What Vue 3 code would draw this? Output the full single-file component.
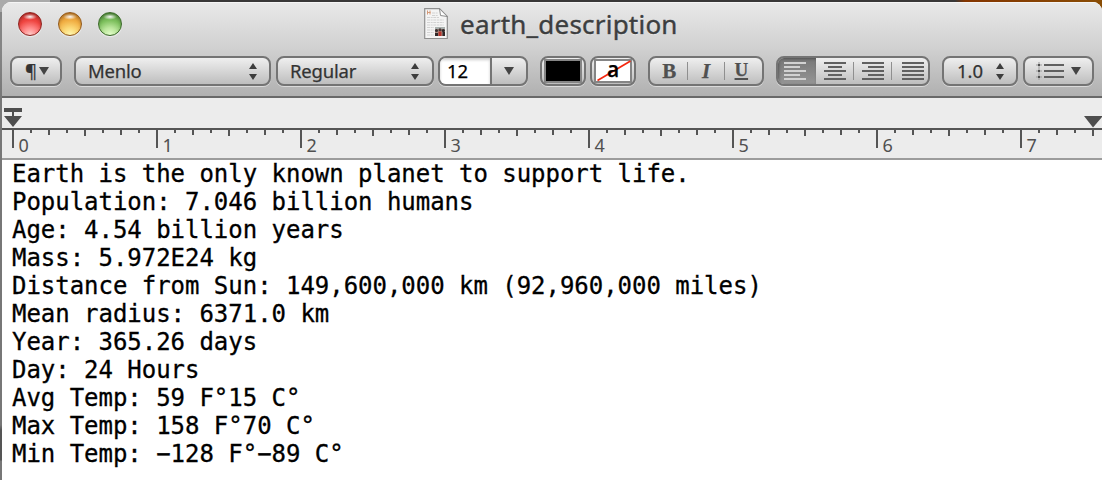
<script setup>
const lines = [
  'Earth is the only known planet to support life.',
  'Population: 7.046 billion humans',
  'Age: 4.54 billion years',
  'Mass: 5.972E24 kg',
  'Distance from Sun: 149,600,000 km (92,960,000 miles)',
  'Mean radius: 6371.0 km',
  'Year: 365.26 days',
  'Day: 24 Hours',
  'Avg Temp: 59 F°15 C°',
  'Max Temp: 158 F°70 C°',
  'Min Temp: −128 F°−89 C°',
]

const tickHeight = (k) => {
  if (k % 8 === 0) return 18
  if (k % 4 === 0) return 6
  return k % 2 === 0 ? 5 : 3
}
const ticks = Array.from({ length: 61 }, (_, k) => ({ x: 10 + k * 18, h: tickHeight(k) }))
const numbers = [0, 1, 2, 3, 4, 5, 6, 7]

const full = [0, 22]
const toRows = (short) => [full, short, full, short, full].map(([x, w], i) => ({ x, w, y: i * 4 }))
const aligns = [
  { name: 'left', rows: toRows([0, 16]) },
  { name: 'center', rows: toRows([4, 14]) },
  { name: 'right', rows: toRows([6, 16]) },
  { name: 'justify', rows: toRows(full) },
]
</script>

<template>
  <div class="desktop">
    <div class="window">
      <header class="chrome">
        <div class="titlebar">
          <div class="lights">
            <i class="light red"></i>
            <i class="light amber"></i>
            <i class="light green"></i>
          </div>
          <div class="title">
            <svg class="doc" width="24" height="32" viewBox="0 0 24 32">
              <path d="M.7.7H15.5L23.3 8.5V30.5H.7Z" fill="#f4f4f4" stroke="#8f8f8f" stroke-width="1.2" />
              <path d="M15.5.7L16.5 7.5L23.3 8.5Z" fill="#fff" stroke="#8b8b8b" />
              <path d="M3.500 2.500v4M6 2.500v4M3.500 4.500h3" stroke="#d59a78" stroke-width="1" />
              <path d="M8 5h6M8 7.5h6M3 9.5h12M3 12h17M3 14.5h17M3 17h17M3 19.5h7M3 22h7M3 24.5h7M3 27h7" stroke="#d2d2d2" stroke-dasharray="3 .7 2 .6" />
              <path d="M11 19h10v9H11Z" fill="#a98f86" />
              <path d="M11 19h10v2H11Z" fill="#a9b0ae" />
              <circle cx="12.500" cy="22.500" r="1.500" fill="#3a3032" />
              <circle cx="16" cy="21.800" r="1.500" fill="#4a3836" />
              <circle cx="19.300" cy="22.500" r="1.600" fill="#2c2729" />
              <path d="M11 25h3v3h-3zM18.500 24H21v4h-2.500z" fill="#30292a" />
              <path d="M14.500 23.500h3v4.500h-3z" fill="#b8322b" />
            </svg>
            <span class="name">earth_description</span>
          </div>
        </div>
        <div class="toolbar">
          <button class="ctl para">
            <span class="pilcrow">¶</span>
            <svg width="10" height="8"><path d="M0 0h10L5 8z" fill="#444" /></svg>
          </button>
          <button class="ctl font">
            <span>Menlo</span>
            <svg width="8" height="17"><path d="M0 6L4 0l4 6zM0 11h8l-4 6z" fill="#3d3d3d" /></svg>
          </button>
          <button class="ctl face">
            <span>Regular</span>
            <svg width="8" height="17"><path d="M0 6L4 0l4 6zM0 11h8l-4 6z" fill="#3d3d3d" /></svg>
          </button>
          <div class="ctl size">
            <span class="size-value">12</span>
            <span class="size-drop"><svg width="10" height="8"><path d="M0 0h10L5 8z" fill="#444" /></svg></span>
          </div>
          <button class="ctl swatch fg"><i class="well black"></i></button>
          <button class="ctl swatch bg">
            <i class="well white">
              <svg class="slash" width="36" height="22"><path d="M1.500 20.500L34.500 1" stroke="#f5270f" stroke-width="1.700" /></svg>
              <b>a</b>
            </i>
          </button>
          <div class="ctl styles">
            <span class="bold">B</span><span class="italic">I</span><span class="under">U</span>
          </div>
          <div class="ctl aligns">
            <span v-for="a in aligns" :key="a.name" class="align" :class="a.name">
              <svg width="22" height="18">
                <rect v-for="r in a.rows" :key="r.y" :x="r.x" :y="r.y" :width="r.w" height="2" />
              </svg>
            </span>
          </div>
          <button class="ctl spacing">
            <span>1.0</span>
            <svg width="8" height="17"><path d="M0 6L4 0l4 6zM0 11h8l-4 6z" fill="#3d3d3d" /></svg>
          </button>
          <button class="ctl list">
            <svg width="28" height="18">
              <path d="M8 3h20M8 9h20M8 15h20" stroke="#606060" stroke-width="2" />
              <path d="M0 3h6M0 9h6M0 15h6M3 0v18" stroke="#9b9b9b" stroke-width="1" />
              <path d="M2 2h2v2H2zM2 8h2v2H2zM2 14h2v2H2z" fill="#505050" />
            </svg>
            <svg width="10" height="8"><path d="M0 0h10L5 8z" fill="#444" /></svg>
          </button>
        </div>
      </header>

      <svg class="ruler" width="1100" height="62" viewBox="0 0 1100 62">
        <rect y="30" width="1100" height="2" fill="#555" />
        <rect v-for="t in ticks" :key="t.x" :x="t.x" y="32" :width="2" :height="t.h" fill="#555" />
        <path d="M2 10h18v4h-8v4h8l-9 11L2 18h8v-4H2z" fill="#4e4e4e" />
        <path d="M1082 18h18v1l-9 10.500z" fill="#4e4e4e" />
        <text v-for="n in numbers" :key="n" :x="16.500 + n * 144" y="54">{{ n }}</text>
        <rect y="60" width="1100" height="2" fill="#9c9c9c" />
      </svg>

      <main class="text">
        <div v-for="line in lines" :key="line">{{ line }}</div>
      </main>
    </div>
  </div>
</template>

<style>
body {
  margin: 0;
  overflow: hidden;
}
</style>

<style scoped>
.desktop {
  box-sizing: border-box;
  width: 1102px;
  height: 480px;
  padding: 2px 0 0 2px;
  background:
    linear-gradient(90deg, #aaa 0 50px, #777 50px 60px, #393737 60px 955px, #843500 965px, #8a4d05 1102px) 0 0 / 1102px 12px no-repeat,
    linear-gradient(#858585 0 48px, #777 100px 425px, #555 430px 460px, #777 461px);
}
.window {
  height: 478px;
  overflow: hidden;
  background: #fff;
  border-radius: 9px 9px 0 0;
}
.chrome {
  box-sizing: border-box;
  height: 96px;
  background: linear-gradient(#e9e9e9, #d0d0d0 50%, #b0b0b0);
  border-bottom: 2px solid #686868;
  box-shadow: inset 0 1px #f5f5f5;
}
.titlebar {
  display: grid;
  grid-template-columns: 422px 1fr;
  height: 54px;
}
.lights {
  display: flex;
  gap: 16px;
  padding: 10px 0 0 16px;
}
.light {
  box-sizing: border-box;
  width: 24px;
  height: 24px;
  border-radius: 50%;
  border: 1.500px solid;
  box-shadow: 0 1px 1px #fff9, inset 0 2px 3px #0003;
}
.red {
  border-color: #8e2420;
  background: radial-gradient(ellipse 7px 3px at 50% 17%, #fff 0, #fff0), radial-gradient(circle at 50% 100%, #ffd0cc 0, #f88 30%, #ef4440 60%, #c92f2c);
}
.amber {
  border-color: #93591b;
  background: radial-gradient(ellipse 7px 3px at 50% 17%, #fff 0, #fff0), radial-gradient(circle at 50% 100%, #fff9b5 0, #fbd876 30%, #f0ad42 60%, #cd7e27);
}
.green {
  border-color: #3b692a;
  background: radial-gradient(ellipse 7px 3px at 50% 17%, #fff 0, #fff0), radial-gradient(circle at 50% 100%, #e5ffcd 0, #bbe69c 30%, #7cbf5c 60%, #4e8d39);
}
.title {
  display: flex;
  align-items: flex-start;
  padding-top: 6px;
}
.name {
  margin: -1px 0 0 12px;
  font: 26px/34px "Noto Sans", "Open Sans", sans-serif;
  letter-spacing: 0.220px;
  color: #3c3e3f;
  -webkit-text-stroke: 0.400px #3c3e3f;
  text-shadow: 0 1px #fff8;
}
.toolbar {
  display: flex;
  padding-left: 8px;
}
.ctl {
  box-sizing: border-box;
  display: flex;
  align-items: center;
  flex: none;
  height: 30px;
  margin: 0;
  padding: 0;
  border: 2px solid #747474;
  border-radius: 8px;
  background: linear-gradient(#efefef, #bebebe);
  box-shadow: 0 1px #ffffff80;
  font: 18.500px/26px "Noto Sans", "Open Sans", sans-serif;
  letter-spacing: -0.200px;
  -webkit-text-stroke: 0.250px currentColor;
  color: #333;
}
.para {
  width: 52px;
  padding-left: 13px;
  gap: 3px;
}
.pilcrow {
  width: 11px;
  font-size: 18.500px;
}
.font {
  width: 197px;
  margin-left: 12px;
  padding: 0 12px;
  justify-content: space-between;
}
.face {
  width: 158px;
  margin-left: 5px;
  padding: 0 13px 0 12px;
  justify-content: space-between;
}
.size {
  width: 90px;
  margin-left: 4px;
  overflow: hidden;
}
.size-value {
  box-sizing: border-box;
  flex: none;
  width: 50px;
  height: 26px;
  padding-left: 7px;
  background: #fff;
  box-shadow: inset 0 2px 3px #0003;
  color: #000;
}
.size-drop {
  display: flex;
  align-items: center;
  flex: 1;
  height: 26px;
  padding-left: 12px;
  border-left: 2px solid #747474;
}
.swatch {
  width: 46px;
  justify-content: center;
}
.fg {
  margin-left: 12px;
}
.bg {
  margin-left: 4px;
}
.well {
  box-sizing: border-box;
  display: flex;
  flex: none;
  width: 38px;
  height: 24px;
  border: 2px solid #858585;
  font-style: normal;
}
.black {
  background: #000;
}
.white {
  position: relative;
  justify-content: center;
  background: #fff;
  color: #000;
}
.slash {
  position: absolute;
  left: 0;
  top: -1px;
}
.white b {
  position: relative;
  font: 600 21px/17px "Open Sans", "Noto Sans", sans-serif;
}
.styles {
  width: 116px;
  margin-left: 12px;
  font: bold 21px/24px "Liberation Serif", serif;
  color: #505050;
}
.styles span {
  box-sizing: border-box;
  width: 38px;
  height: 18px;
  line-height: 18px;
  text-align: center;
}
.styles .bold {
  padding-left: 1px;
}
.styles .italic {
  font-style: italic;
  border: solid #8f8f8f;
  border-width: 0 1px;
}
.styles .under {
  font-size: 19px;
  line-height: 15px;
  padding-right: 4px;
  text-decoration: underline;
  text-decoration-thickness: 1.500px;
  text-underline-offset: 2px;
}
.aligns {
  width: 154px;
  margin-left: 12px;
  overflow: hidden;
}
.align {
  box-sizing: border-box;
  position: relative;
  display: flex;
  align-items: center;
  flex: none;
  width: 38px;
  height: 26px;
  padding-left: 8px;
}
.align svg {
  fill: #606060;
}
.left {
  padding-left: 6px;
  background: linear-gradient(#777, #959595);
  box-shadow: inset 1px 1px 3px #0005;
}
.left svg {
  fill: #d2d2d2;
}
.right::before,
.justify::before {
  content: "";
  position: absolute;
  left: -1px;
  top: 4px;
  width: 1px;
  height: 18px;
  background: #8f8f8f;
}
.justify {
  padding-left: 10px;
}
.spacing {
  width: 76px;
  margin-left: 12px;
  padding: 0 12px 0 13px;
  justify-content: space-between;
  letter-spacing: 0;
}
.list {
  width: 71px;
  margin-left: 5px;
  padding-left: 11px;
  gap: 7px;
}
.ruler {
  display: block;
  background: #ececec;
}
.ruler text {
  font: 18px "Noto Sans", "Open Sans", sans-serif;
  fill: #505050;
}
.text {
  padding: 0 0 0 10px;
  font: 24px/28px "DejaVu Sans Mono", "Liberation Mono", monospace;
  letter-spacing: -0.030px;
  color: #000;
  -webkit-text-stroke: 0.300px #000;
  white-space: pre;
}
</style>
